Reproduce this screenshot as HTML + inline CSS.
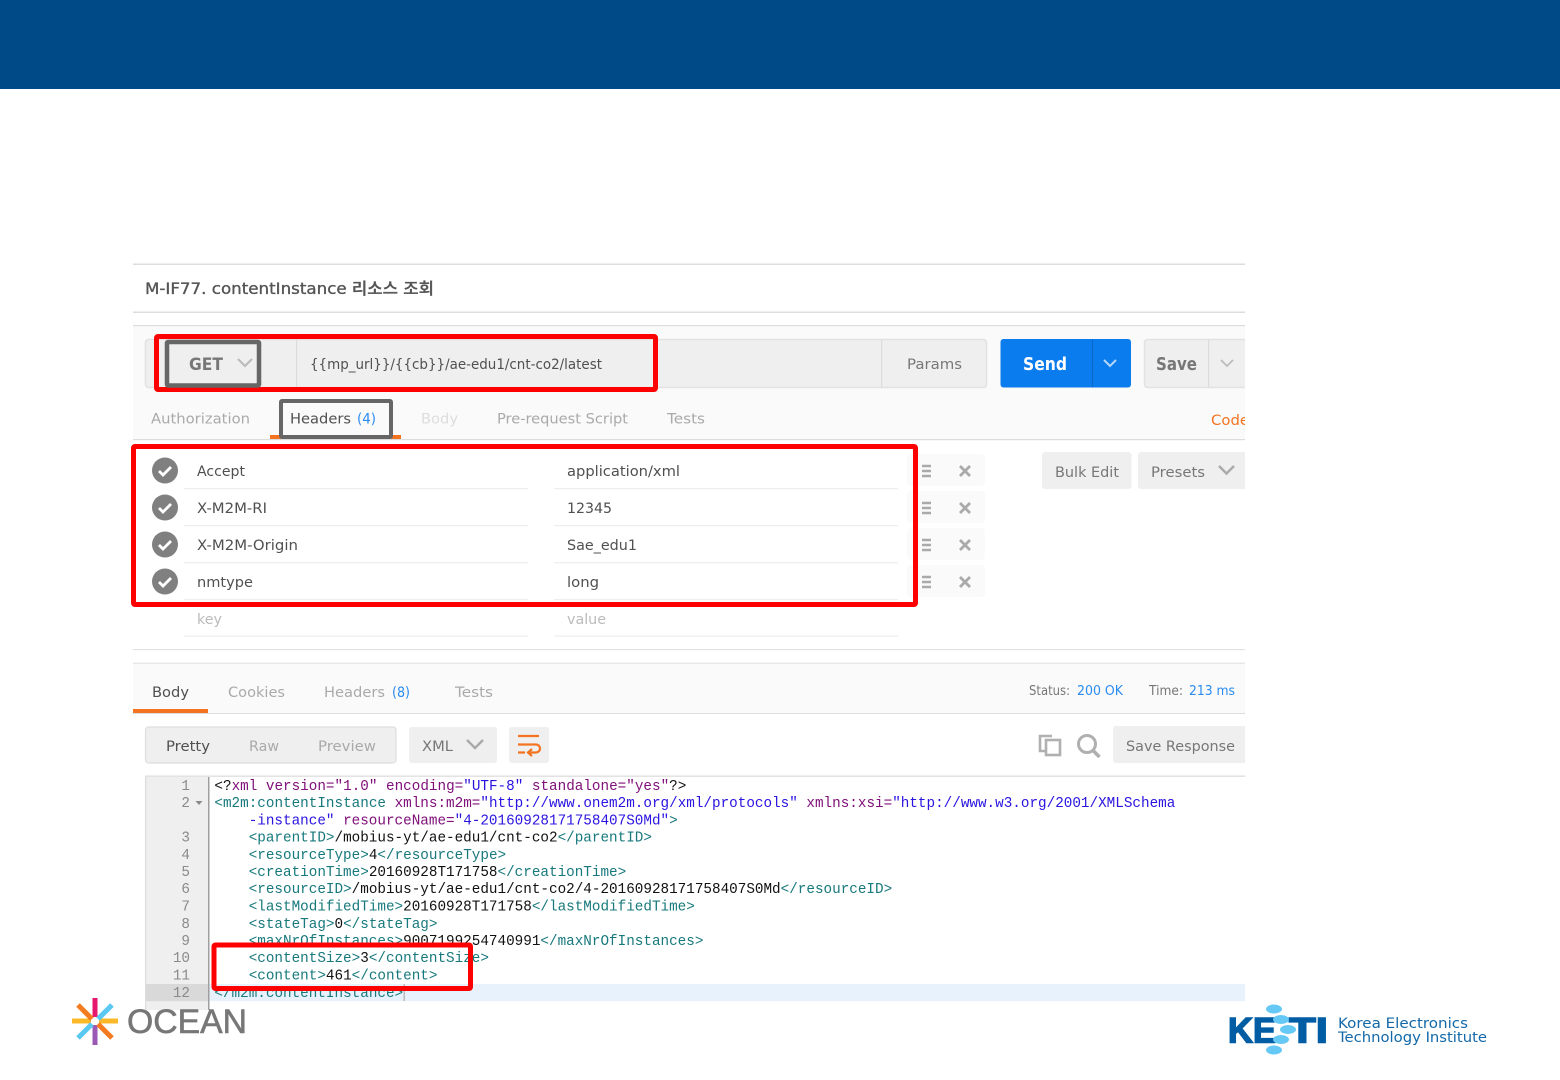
<!DOCTYPE html>
<html lang="ko"><head><meta charset="utf-8"><title>M-IF77 contentInstance</title>
<style>
html,body{margin:0;padding:0;background:#fff;width:1560px;height:1080px;overflow:hidden}
svg{display:block}
.u{font-family:"DejaVu Sans","Noto Sans CJK KR",sans-serif;font-size:14.5px}
.g{fill:#aaa}.d{fill:#505050}.m{fill:#777}.b{fill:#2a8bf0}
.c{font-family:"Liberation Mono",monospace;font-size:14.3px;fill:#111;white-space:pre}
.t{fill:#17797c}.a{fill:#80107a}.s{fill:#2a14e0}.k{fill:#111}
.n{font-family:"Liberation Mono",monospace;font-size:14.3px;fill:#8a8a8a;text-anchor:end}
</style></head><body>
<svg width="1560" height="1080" viewBox="0 0 1560 1080" xmlns="http://www.w3.org/2000/svg">
<defs><clipPath id="cp"><rect x="133" y="260" width="1112" height="760"/></clipPath></defs>
<rect width="1560" height="1080" fill="#fff"/>
<rect width="1560" height="89" fill="#004a88"/>

<!-- title -->
<rect x="133" y="263.5" width="1112" height="1.5" fill="#ddd"/>
<text class="u" x="145" y="294" style="font-size:16px;font-weight:500" fill="#555" stroke="#555" stroke-width=".35" textLength="289" lengthAdjust="spacingAndGlyphs">M-IF77. contentInstance 리소스 조회</text>
<rect x="133" y="311.5" width="1112" height="1.5" fill="#ddd"/>

<!-- request bar -->
<rect x="133" y="325" width="1112" height="115" fill="#fafafa"/>
<rect x="133" y="325" width="1112" height="1.2" fill="#ddd"/>
<rect x="133" y="439" width="1112" height="1.2" fill="#ddd"/>
<rect x="145.5" y="339.5" width="841" height="48" rx="3" fill="#efefef" stroke="#e2e2e2" stroke-width="1.5"/>
<rect x="296" y="340" width="1.2" height="47" fill="#dcdcdc"/>
<rect x="881" y="340" width="1.2" height="47" fill="#dcdcdc"/>
<text class="u m" x="189" y="370" style="font-size:17px;font-weight:bold" textLength="34" lengthAdjust="spacingAndGlyphs">GET</text>
<path d="M238 359l7 7 7-7" fill="none" stroke="#bbb" stroke-width="2.2"/>
<text class="u d" x="310" y="369" textLength="292" lengthAdjust="spacingAndGlyphs">{{mp_url}}/{{cb}}/ae-edu1/cnt-co2/latest</text>
<text class="u m" x="907" y="369" textLength="55" lengthAdjust="spacingAndGlyphs">Params</text>
<rect x="1000.5" y="339" width="130.5" height="48.5" rx="3" fill="#0b7cee"/>
<rect x="1092" y="339" width="1" height="48.5" fill="#0a68c4"/>
<text class="u" x="1023" y="370" fill="#fff" style="font-size:18px;font-weight:bold" textLength="44" lengthAdjust="spacingAndGlyphs">Send</text>
<path d="M1104 360l6 6 6-6" fill="none" stroke="#b5d6f8" stroke-width="2"/>
<rect x="1144.5" y="339.5" width="105" height="48" rx="3" fill="#efefef" stroke="#e2e2e2" stroke-width="1.5" clip-path="url(#cp)"/>
<rect x="1208" y="340" width="1.2" height="47" fill="#dcdcdc"/>
<text class="u m" x="1156" y="370" style="font-size:18px;font-weight:bold" textLength="41" lengthAdjust="spacingAndGlyphs">Save</text>
<path d="M1221 360l6 6 6-6" fill="none" stroke="#bbb" stroke-width="1.8"/>

<!-- request tabs -->
<text class="u g" x="151" y="423.500" textLength="99" lengthAdjust="spacingAndGlyphs">Authorization</text>
<rect x="270" y="435" width="131" height="4" fill="#f47321"/>
<text class="u d" x="290" y="423.500" textLength="61" lengthAdjust="spacingAndGlyphs">Headers</text>
<text class="u b" x="357" y="423.500" textLength="19" lengthAdjust="spacingAndGlyphs">(4)</text>
<text class="u" fill="#ddd" x="421" y="423.500" textLength="37" lengthAdjust="spacingAndGlyphs">Body</text>
<text class="u g" x="497" y="423.500" textLength="131" lengthAdjust="spacingAndGlyphs">Pre-request Script</text>
<text class="u g" x="667" y="423.500" textLength="38" lengthAdjust="spacingAndGlyphs">Tests</text>
<g clip-path="url(#cp)"><text class="u" fill="#f47321" x="1211" y="425" textLength="38" lengthAdjust="spacingAndGlyphs">Code</text></g>

<!-- header rows -->
<g fill="#808080"><circle cx="165" cy="470.5" r="13"/><circle cx="165" cy="507.5" r="13"/><circle cx="165" cy="544.5" r="13"/><circle cx="165" cy="581.5" r="13"/></g>
<g fill="none" stroke="#fff" stroke-width="2.8"><path d="M159 471l4 4 8-8"/><path d="M159 508l4 4 8-8"/><path d="M159 545l4 4 8-8"/><path d="M159 582l4 4 8-8"/></g>
<g fill="#eee">
<rect x="184" y="488" width="344" height="1.3"/><rect x="554" y="488" width="344" height="1.3"/>
<rect x="184" y="525" width="344" height="1.3"/><rect x="554" y="525" width="344" height="1.3"/>
<rect x="184" y="562" width="344" height="1.3"/><rect x="554" y="562" width="344" height="1.3"/>
<rect x="184" y="599" width="344" height="1.3"/><rect x="554" y="599" width="344" height="1.3"/>
<rect x="184" y="635.5" width="344" height="1.3"/><rect x="554" y="635.5" width="344" height="1.3"/>
</g>
<text class="u d" x="197" y="476" textLength="48" lengthAdjust="spacingAndGlyphs">Accept</text>
<text class="u d" x="197" y="513" textLength="70" lengthAdjust="spacingAndGlyphs">X-M2M-RI</text>
<text class="u d" x="197" y="550" textLength="101" lengthAdjust="spacingAndGlyphs">X-M2M-Origin</text>
<text class="u d" x="197" y="587" textLength="56" lengthAdjust="spacingAndGlyphs">nmtype</text>
<text class="u" fill="#bbb" x="197" y="624" textLength="25" lengthAdjust="spacingAndGlyphs">key</text>
<text class="u d" x="567" y="476" textLength="113" lengthAdjust="spacingAndGlyphs">application/xml</text>
<text class="u d" x="567" y="513" textLength="45" lengthAdjust="spacingAndGlyphs">12345</text>
<text class="u d" x="567" y="550" textLength="70" lengthAdjust="spacingAndGlyphs">Sae_edu1</text>
<text class="u d" x="567" y="587" textLength="32" lengthAdjust="spacingAndGlyphs">long</text>
<text class="u" fill="#bbb" x="567" y="624" textLength="39" lengthAdjust="spacingAndGlyphs">value</text>

<!-- row actions -->
<g fill="#fafafa"><rect x="907" y="454" width="78" height="32" rx="4"/><rect x="907" y="491" width="78" height="32" rx="4"/><rect x="907" y="528" width="78" height="32" rx="4"/><rect x="907" y="565" width="78" height="32" rx="4"/></g>
<g fill="none" stroke="#aaa" stroke-width="2.6">
<path d="M922 466h9M922 471h9M922 476h9"/><path d="M922 503h9M922 508h9M922 513h9"/><path d="M922 540h9M922 545h9M922 550h9"/><path d="M922 577h9M922 582h9M922 587h9"/>
</g>
<g fill="none" stroke="#aaa" stroke-width="2.8">
<path d="M960 466l10 10M970 466l-10 10"/><path d="M960 503l10 10M970 503l-10 10"/><path d="M960 540l10 10M970 540l-10 10"/><path d="M960 577l10 10M970 577l-10 10"/>
</g>
<rect x="1042" y="452" width="89.500" height="37" rx="3" fill="#efefef"/>
<text class="u m" x="1055" y="477" textLength="64" lengthAdjust="spacingAndGlyphs">Bulk Edit</text>
<g clip-path="url(#cp)"><rect x="1138" y="452" width="115" height="37" rx="3" fill="#efefef"/></g>
<text class="u m" x="1151" y="477" textLength="54" lengthAdjust="spacingAndGlyphs">Presets</text>
<path d="M1219 466l7.500 7.500 7.500-7.500" fill="none" stroke="#aaa" stroke-width="2.400"/>

<!-- response header -->
<rect x="133" y="649" width="1112" height="1.2" fill="#e2e2e2"/>
<rect x="133" y="663" width="1112" height="51" fill="#fafafa"/>
<rect x="133" y="662.500" width="1112" height="1.500" fill="#e8e8e8"/>
<rect x="133" y="713" width="1112" height="1" fill="#ddd"/>
<rect x="133" y="709" width="75" height="4" fill="#f47321"/>
<text class="u d" x="152" y="697" textLength="37" lengthAdjust="spacingAndGlyphs">Body</text>
<text class="u g" x="228" y="697" textLength="57" lengthAdjust="spacingAndGlyphs">Cookies</text>
<text class="u g" x="324" y="697" textLength="61" lengthAdjust="spacingAndGlyphs">Headers</text>
<text class="u b" x="392" y="697" textLength="18" lengthAdjust="spacingAndGlyphs">(8)</text>
<text class="u g" x="455" y="697" textLength="38" lengthAdjust="spacingAndGlyphs">Tests</text>
<text class="u m" x="1029" y="695" style="font-size:13px" textLength="41" lengthAdjust="spacingAndGlyphs">Status:</text>
<text class="u b" x="1077" y="695" style="font-size:13.500px" textLength="46" lengthAdjust="spacingAndGlyphs">200 OK</text>
<text class="u m" x="1149" y="695" style="font-size:13px" textLength="34" lengthAdjust="spacingAndGlyphs">Time:</text>
<text class="u b" x="1189" y="695" style="font-size:13.500px" textLength="46" lengthAdjust="spacingAndGlyphs">213 ms</text>

<!-- view toolbar -->
<rect x="145.500" y="727" width="250.500" height="36" rx="3" fill="#efefef" stroke="#dedede" stroke-width="1.200"/>
<text class="u d" x="166" y="751" textLength="44" lengthAdjust="spacingAndGlyphs">Pretty</text>
<text class="u g" x="249" y="751" textLength="30" lengthAdjust="spacingAndGlyphs">Raw</text>
<text class="u g" x="318" y="751" textLength="58" lengthAdjust="spacingAndGlyphs">Preview</text>
<rect x="409" y="727" width="88" height="36" rx="3" fill="#efefef"/>
<text class="u m" x="422" y="751" textLength="31" lengthAdjust="spacingAndGlyphs">XML</text>
<path d="M467 740l8 8 8-8" fill="none" stroke="#aaa" stroke-width="2.400"/>
<rect x="509" y="727" width="40" height="36" rx="3" fill="#efefef"/>
<path d="M518 736h21M518 744.500h18a3.500 3.500 0 0 1 0 8h-7M518 752.500h7M532 749l-4 3.500 4 3.500" fill="none" stroke="#f47321" stroke-width="2.200"/>
<path d="M1052 736h-12v15h5" fill="none" stroke="#b0b0b0" stroke-width="2.600"/>
<rect x="1046" y="740" width="14" height="15" fill="#fff" stroke="#b0b0b0" stroke-width="2.600"/>
<circle cx="1087" cy="744" r="8.500" fill="none" stroke="#b0b0b0" stroke-width="3"/>
<path d="M1093 750.500l6.500 6.500" stroke="#b0b0b0" stroke-width="3.600"/>
<g clip-path="url(#cp)"><rect x="1113" y="726" width="142" height="37" rx="3" fill="#efefef"/></g>
<text class="u m" x="1126" y="751" textLength="109" lengthAdjust="spacingAndGlyphs">Save Response</text>

<!-- code editor -->
<rect x="145" y="775.500" width="1100" height="1.300" fill="#dcdcdc"/>
<rect x="145.500" y="777" width="63" height="233" fill="#efefef"/>
<rect x="145" y="776" width="1.300" height="234" fill="#ddd"/>
<rect x="208" y="777" width="1.500" height="233" fill="#9f9f9f"/>
<rect x="146" y="984" width="62" height="17.200" fill="#d9d9d9"/>
<rect x="209.500" y="984" width="1035.500" height="17.200" fill="#e8f2fd"/>
<g>
<text class="n" x="190" y="790">1</text>
<text class="n" x="190" y="807">2</text>
<text class="n" x="190" y="841.500">3</text>
<text class="n" x="190" y="859">4</text>
<text class="n" x="190" y="876">5</text>
<text class="n" x="190" y="893">6</text>
<text class="n" x="190" y="910.500">7</text>
<text class="n" x="190" y="928">8</text>
<text class="n" x="190" y="945">9</text>
<text class="n" x="190" y="962">10</text>
<text class="n" x="190" y="979.500">11</text>
<text class="n" x="190" y="997">12</text>
</g>
<path d="M195.500 801h7l-3.500 4z" fill="#888"/>
<text class="c" x="214.400" y="790"><tspan class="k">&lt;?</tspan><tspan class="a">xml version=</tspan><tspan class="a">"1.0"</tspan><tspan class="a"> encoding=</tspan><tspan class="s">"UTF-8"</tspan><tspan class="a"> standalone=</tspan><tspan class="a">"yes"</tspan><tspan class="k">?&gt;</tspan></text>
<text class="c" x="214.400" y="807"><tspan class="t">&lt;m2m:contentInstance</tspan><tspan class="a"> xmlns:m2m=</tspan><tspan class="s">"http://www.onem2m.org/xml/protocols"</tspan><tspan class="a"> xmlns:xsi=</tspan><tspan class="s">"http://www.w3.org/2001/XMLSchema</tspan></text>
<text class="c" x="248.700" y="824.500"><tspan class="s">-instance"</tspan><tspan class="a"> resourceName=</tspan><tspan class="s">"4-20160928171758407S0Md"</tspan><tspan class="t">&gt;</tspan></text>
<text class="c" x="248.700" y="841.500"><tspan class="t">&lt;parentID&gt;</tspan>/mobius-yt/ae-edu1/cnt-co2<tspan class="t">&lt;/parentID&gt;</tspan></text>
<text class="c" x="248.700" y="859"><tspan class="t">&lt;resourceType&gt;</tspan>4<tspan class="t">&lt;/resourceType&gt;</tspan></text>
<text class="c" x="248.700" y="876"><tspan class="t">&lt;creationTime&gt;</tspan>20160928T171758<tspan class="t">&lt;/creationTime&gt;</tspan></text>
<text class="c" x="248.700" y="893"><tspan class="t">&lt;resourceID&gt;</tspan>/mobius-yt/ae-edu1/cnt-co2/4-20160928171758407S0Md<tspan class="t">&lt;/resourceID&gt;</tspan></text>
<text class="c" x="248.700" y="910.500"><tspan class="t">&lt;lastModifiedTime&gt;</tspan>20160928T171758<tspan class="t">&lt;/lastModifiedTime&gt;</tspan></text>
<text class="c" x="248.700" y="928"><tspan class="t">&lt;stateTag&gt;</tspan>0<tspan class="t">&lt;/stateTag&gt;</tspan></text>
<text class="c" x="248.700" y="945"><tspan class="t">&lt;maxNrOfInstances&gt;</tspan>9007199254740991<tspan class="t">&lt;/maxNrOfInstances&gt;</tspan></text>
<text class="c" x="248.700" y="962"><tspan class="t">&lt;contentSize&gt;</tspan>3<tspan class="t">&lt;/contentSize&gt;</tspan></text>
<text class="c" x="248.700" y="979.500"><tspan class="t">&lt;content&gt;</tspan>461<tspan class="t">&lt;/content&gt;</tspan></text>
<text class="c" x="214.400" y="997"><tspan class="t">&lt;/m2m:contentInstance&gt;</tspan></text>
<rect x="403.500" y="984" width="1.500" height="17" fill="#bbb"/>

<!-- annotations -->
<rect x="156.500" y="336.500" width="499" height="53" rx="1.500" fill="none" stroke="#fe0000" stroke-width="5"/>
<rect x="167" y="342" width="92" height="43.500" rx="1" fill="none" stroke="#666" stroke-width="4.500"/>
<rect x="281" y="401" width="110" height="36" rx="1" fill="none" stroke="#666" stroke-width="4"/>
<rect x="133.500" y="446.500" width="782" height="158" rx="1.500" fill="none" stroke="#fe0000" stroke-width="5"/>
<rect x="214" y="945" width="256.500" height="43.500" rx="1.500" fill="none" stroke="#fe0000" stroke-width="5"/>

<!-- OCEAN logo -->
<g stroke-width="5" fill="none">
<path d="M95 998v19" stroke="#e6186e"/><path d="M95 1025v20" stroke="#9b59b6"/>
<path d="M72 1021h19M99 1021h19" stroke="#fbb829"/>
<path d="M78 1005l14 14M98 1024l14 14" stroke="#f47b20"/>
<path d="M112 1005l-14 14M92 1024l-14 14" stroke="#5ac8f0"/>
</g>
<text x="127" y="1033" font-family="Liberation Sans,sans-serif" font-size="34" fill="#777" stroke="#777" stroke-width=".6" textLength="120" lengthAdjust="spacingAndGlyphs">OCEAN</text>

<!-- KETI logo -->
<g font-family="Liberation Sans,sans-serif" font-weight="bold" font-size="35" fill="#005da4" stroke="#005da4" stroke-width="1.500">
<text x="1228" y="1042.500" textLength="48" lengthAdjust="spacingAndGlyphs">KE</text>
<text x="1289" y="1042.500" textLength="39" lengthAdjust="spacingAndGlyphs">TI</text>
</g>
<g fill="#66c8f5"><ellipse cx="1274" cy="1009" rx="8" ry="4.500"/><ellipse cx="1281" cy="1019.500" rx="8" ry="4.500"/><ellipse cx="1288" cy="1029.500" rx="8" ry="4.500"/><ellipse cx="1281" cy="1039.500" rx="8" ry="4.500"/><ellipse cx="1274" cy="1050" rx="8" ry="4.500"/></g>
<g font-family="DejaVu Sans,sans-serif" font-size="14" fill="#1268a8">
<text x="1338" y="1028" textLength="130" lengthAdjust="spacingAndGlyphs">Korea Electronics</text>
<text x="1338" y="1042" textLength="149" lengthAdjust="spacingAndGlyphs">Technology Institute</text>
</g>
</svg>
</body></html>
